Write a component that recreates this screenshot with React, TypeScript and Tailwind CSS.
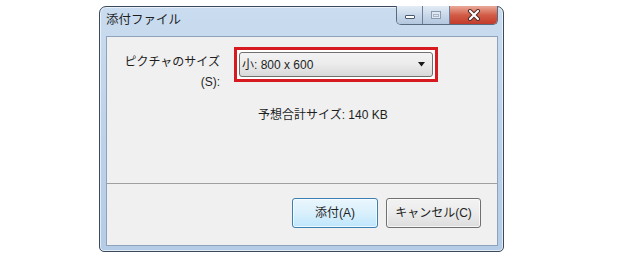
export default function App() {
  return (
    <div className="w-[640px] h-[261px] bg-white pl-[99px] pt-[6px] font-['Liberation_Sans','Noto_Sans_CJK_JP',sans-serif]">
      <div className="w-[405px] h-[246px] border border-[#3b4a5c] rounded-t-[7px] rounded-b-[5px] bg-gradient-to-b from-[#cadcef] via-[#bdd3ea] to-[#b4cce6] flex flex-col pl-[6px] pr-[5px] pb-[5px] shadow-[inset_0_0_0_1px_rgba(255,255,255,0.6)]">
        <div className="h-[29px] flex items-start justify-between">
          <div className="pt-[5px] text-[12.5px] leading-[16px] text-[#1e1e1e]">添付ファイル</div>
          <div className="flex -mt-px h-[19px] border border-t-0 border-[#5a6b80] rounded-b-[5px] overflow-hidden">
            <div className="w-[26px] h-full bg-gradient-to-b from-[#e3ecf6] via-[#c9d8ea] to-[#b3c7de] border-r border-[#6d7f96] flex items-center justify-center">
              <div className="w-[10px] h-[4px] bg-white border border-[#4a5870] rounded-[1px] mt-[3px]" />
            </div>
            <div className="w-[27px] h-full bg-gradient-to-b from-[#e3ecf6] via-[#c9d8ea] to-[#b3c7de] border-r border-[#6d7f96] flex items-center justify-center">
              <div className="w-[10px] h-[8px] border border-[#8a9ab0] bg-[#dfe8f2] flex items-center justify-center">
                <div className="w-[6px] h-[3px] border border-[#a8b6c8]" />
              </div>
            </div>
            <div className="w-[47px] h-full bg-gradient-to-b from-[#e9a999] via-[#d25c47] to-[#c23a2b] flex items-center justify-center">
              <svg width="14" height="12" viewBox="0 0 14 12">
                <path d="M3 2 L11 10 M11 2 L3 10" stroke="#4a2a28" strokeWidth="4" strokeLinecap="round" />
                <path d="M3 2 L11 10 M11 2 L3 10" stroke="#ffffff" strokeWidth="2.2" strokeLinecap="round" />
              </svg>
            </div>
          </div>
        </div>
        <div className="flex-1 bg-[#f0f0f0] border border-[#8ea3bb] flex flex-col">
          <div className="h-[146px] flex flex-col pt-[10px]">
            <div className="flex">
              <div className="w-[113px] pt-[5px] text-right text-[12px] leading-[20px] text-[#1e1e1e]">
                <div>ピクチャのサイズ</div>
                <div>(S):</div>
              </div>
              <div className="ml-[14px] w-[204px] h-[35px] border-[3px] border-[#d71920] p-[2px] bg-white">
                <div className="h-full border border-[#707070] rounded-[3px] bg-gradient-to-b from-[#f3f3f3] via-[#ebebeb] to-[#d9d9d9] flex items-center justify-between pl-[2px] pr-[6px]">
                  <span className="text-[12px] leading-[16px] text-[#1e1e1e]">小: 800 x 600</span>
                  <svg width="8" height="5" viewBox="0 0 8 5">
                    <path d="M0 0 H7 L3.5 4.5 Z" fill="#1a1a1a" />
                  </svg>
                </div>
              </div>
            </div>
            <div className="mt-[15px] pl-[151px] text-[12px] leading-[16px] text-[#1e1e1e]">予想合計サイズ: 140 KB</div>
          </div>
          <div className="h-px bg-[#a0a0a0]" />
          <div className="flex justify-end gap-[8px] pt-[14px] pr-[16px]">
            <div className="w-[86px] h-[30px] rounded-[3px] border border-[#3c7fb1] bg-gradient-to-b from-[#eaf6fd] via-[#d9f0fc] to-[#bee6fd] shadow-[inset_0_0_0_1px_rgba(255,255,255,0.7)] flex items-center justify-center text-[12px] text-[#1e1e1e]">
              添付(A)
            </div>
            <div className="w-[95px] h-[30px] rounded-[3px] border border-[#707070] bg-gradient-to-b from-[#f2f2f2] via-[#ebebeb] to-[#dddddd] shadow-[inset_0_0_0_1px_rgba(255,255,255,0.7)] flex items-center justify-center text-[12px] text-[#1e1e1e]">
              キャンセル(C)
            </div>
          </div>
        </div>
      </div>
    </div>
  );
}
